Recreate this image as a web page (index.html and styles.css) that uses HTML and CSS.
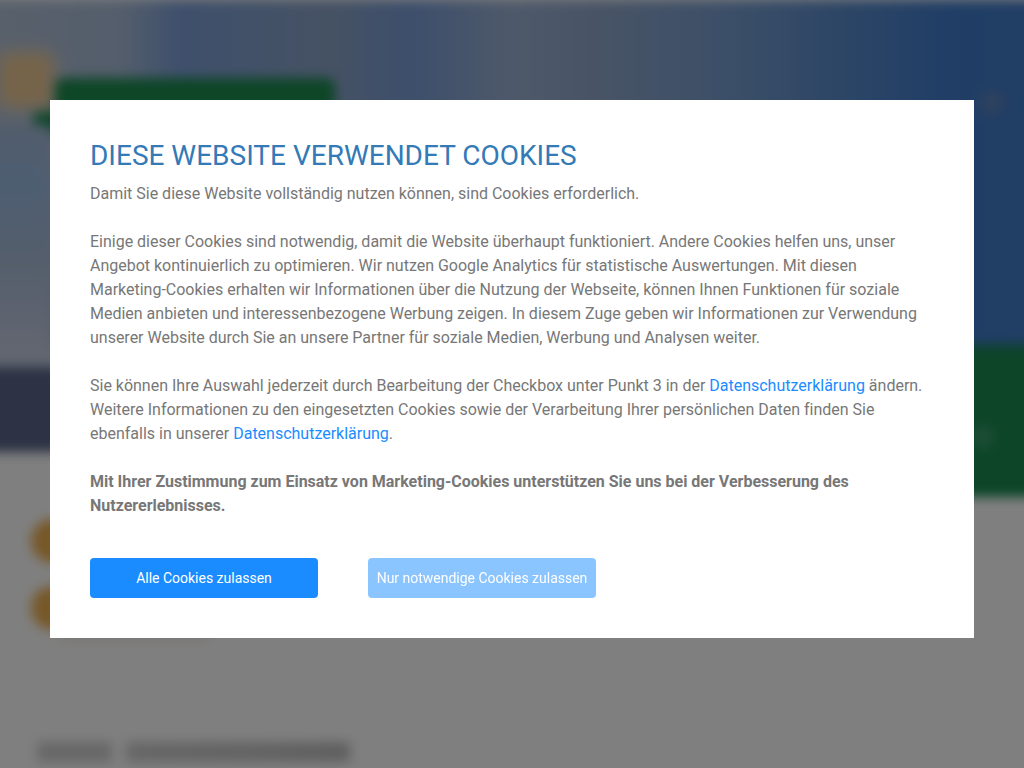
FILE: index.html
```html
<!DOCTYPE html>
<html lang="de">
<head>
<meta charset="utf-8">
<title>Diese Website verwendet Cookies</title>
<link rel="stylesheet" href="styles.css">
</head>
<body>
<div class="site" aria-hidden="true">
  <div class="hero">
    <div class="logo"></div>
    <div class="tab"></div>
    <div class="tab-low"></div>
    <div class="hero-light"></div>
    <div class="dot"></div>
  </div>
  <div class="band">
    <div class="band-navy"></div>
    <div class="band-green"><div class="band-dot"></div></div>
  </div>
  <div class="medal medal-one"></div>
  <div class="medal medal-two"></div>
  <div class="medal-note"></div>
  <div class="page-title"><span class="word-short"></span><span class="word-long"></span></div>
</div>
<div class="dim"></div>
<main class="modal">
  <h1 class="modal-title">DIESE WEBSITE VERWENDET COOKIES</h1>
  <p class="copy">Damit Sie diese Website vollständig nutzen können, sind Cookies erforderlich.</p>
  <p class="copy">Einige dieser Cookies sind notwendig, damit die Website überhaupt funktioniert. Andere Cookies helfen uns, unser Angebot kontinuierlich zu optimieren. Wir nutzen Google Analytics für statistische Auswertungen. Mit diesen Marketing-Cookies erhalten wir Informationen über die Nutzung der Webseite, können Ihnen Funktionen für soziale Medien anbieten und interessenbezogene Werbung zeigen. In diesem Zuge geben wir Informationen zur Verwendung unserer Website durch Sie an unsere Partner für soziale Medien, Werbung und Analysen weiter.</p>
  <p class="copy">Sie können Ihre Auswahl jederzeit durch Bearbeitung der Checkbox unter Punkt 3 in der <a href="#">Datenschutzerklärung</a> ändern. Weitere Informationen zu den eingesetzten Cookies sowie der Verarbeitung Ihrer persönlichen Daten finden Sie ebenfalls in unserer <a href="#">Datenschutzerklärung</a>.</p>
  <p class="copy copy-strong">Mit Ihrer Zustimmung zum Einsatz von Marketing-Cookies unterstützen Sie uns bei der Verbesserung des Nutzererlebnisses.</p>
  <div class="actions">
    <button class="btn" type="button">Alle Cookies zulassen</button>
    <button class="btn btn-muted" type="button">Nur notwendige Cookies zulassen</button>
  </div>
</main>
</body>
</html>
```
FILE: styles.css
```css
* { box-sizing: border-box; }
html, body { margin: 0; height: 100%; overflow: hidden; background: #fff; }
body { font-family: Roboto, "Liberation Sans", sans-serif; }

.site {
  position: fixed;
  inset: -20px;
  filter: blur(6px);
  background: #fff;
}
.hero {
  position: absolute;
  left: 0; right: 0; top: 20px;
  height: 345px;
  background: linear-gradient(90deg,
    #b0c0d6 20px, #a8bcd8 140px, #7ea0d8 200px, #84a2d0 270px, #8ca4c8 350px,
    #7a9ed8 430px, #9cb2d4 532px, #90a8cc 620px, #7a9fd0 740px, #5a8ccc 860px,
    #407ccc 970px, #447cc8 1064px);
}
.logo {
  position: absolute;
  left: 20px; top: 54px;
  width: 52px; height: 52px;
  border-radius: 8px;
  background: #ecc894;
  box-shadow: 0 0 12px 6px #cfccc4;
  filter: blur(5px);
}
.tab {
  position: absolute;
  left: 75px; top: 78px;
  width: 280px; height: 60px;
  border-radius: 8px;
  background: #1c8c50;
}
.tab-low {
  position: absolute;
  left: 54px; top: 112px;
  width: 60px; height: 20px;
  background: #1c8c50;
}
.hero-light {
  position: absolute;
  left: 0; top: 125px;
  width: 70px; height: 220px;
  background: linear-gradient(#a4bad8 0, #9cbce4 60px, #a8bcd8 130px, #c4cce2 100%);
}
.dot {
  position: absolute;
  right: 40px; top: 91px;
  width: 24px; height: 24px;
  border-radius: 50%;
  background: #5c84bc;
}
.band {
  position: absolute;
  left: 0; right: 0; top: 365px;
  height: 152px;
  display: flex;
}
.band-navy {
  width: 500px;
  height: 107px;
  background: linear-gradient(#c4cce2 22px, #5a668a 22px);
}
.band-green {
  position: relative;
  flex: 1;
  background: #188a50;
}
.band-dot {
  position: absolute;
  right: 49px; top: 80px;
  width: 24px; height: 24px;
  border-radius: 50%;
  background: #389a68;
}
.medal {
  position: absolute;
  left: 51px;
  width: 44px; height: 44px;
  border-radius: 50%;
  background: #eeb050;
}
.medal-one { top: 539px; }
.medal-two { top: 606px; }
.medal-note {
  position: absolute;
  left: 80px; top: 655px;
  width: 150px; height: 6px;
  background: #efe9de;
}
.page-title {
  position: absolute;
  left: 57px; top: 762px;
  display: flex;
  gap: 14px;
  height: 20px;
}
.word-short { width: 75px; background: #cfcfcf; }
.word-long { width: 224px; background: linear-gradient(90deg, #cdcdcd, #c6c6c6 60%, #bebebe); }
.dim {
  position: fixed;
  inset: 0;
  background: rgba(0, 0, 0, .5);
}

.modal {
  position: fixed;
  left: 50px; top: 100px;
  width: 924px;
  height: 538px;
  padding: 40px;
  background: #fff;
  color: #777;
  font-size: 16px;
  line-height: 24px;
  letter-spacing: -0.006px;
}
.modal-title {
  margin: 0 0 10px;
  color: #337ab7;
  font-size: 28px;
  font-weight: 400;
  line-height: 32px;
}
.copy { margin: 0 0 24px; }
.copy a { color: #1a8cff; text-decoration: none; }
.copy-strong { font-weight: 700; }
.actions {
  display: flex;
  gap: 50px;
  margin-top: 40px;
}
.btn {
  width: 228px;
  height: 40px;
  padding: 0;
  border: 0;
  border-radius: 4px;
  background: #1a8cff;
  color: #fff;
  font: 400 14px/20px Roboto, "Liberation Sans", sans-serif;
  letter-spacing: -0.01px;
}
.btn-muted { opacity: .5; }
```
